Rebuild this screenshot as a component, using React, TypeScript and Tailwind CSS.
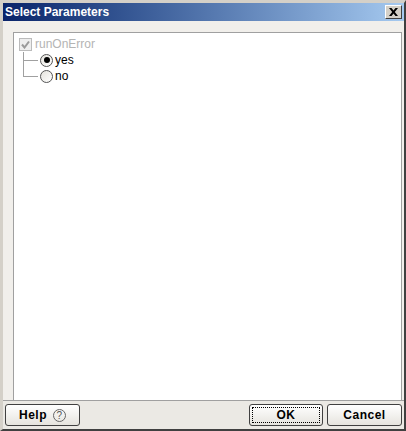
function TreeBranch({ label, checked, last }: { label: string; checked?: boolean; last?: boolean }) {
  return (
    <div className="flex h-4 items-center">
      <div className={`w-px shrink-0 self-start bg-[#a0a0a0] ${last ? "h-[9px]" : "h-4"}`} />
      <div className="h-px w-[14px] shrink-0 bg-[#a0a0a0]" />
      <div className="ml-[2px] flex h-[13px] w-[13px] shrink-0 items-center justify-center rounded-full border border-[#555] bg-gradient-to-br from-[#e4e2dc] to-white">
        {checked && <div className="h-[6px] w-[6px] rounded-full bg-black" />}
      </div>
      <span className="ml-[2px] text-[12px] leading-4 text-black">{label}</span>
    </div>
  );
}

function DialogButton({
  children,
  focused,
  className,
}: {
  children: React.ReactNode;
  focused?: boolean;
  className: string;
}) {
  return (
    <button
      className={`flex h-[22px] items-center justify-center rounded-[3px] border border-[#404040] bg-gradient-to-b from-white to-[#e6e4de] font-['Liberation_Sans'] text-[12px] font-bold tracking-[0.5px] text-black ${className}`}
    >
      {focused ? (
        <span className="flex h-[16px] w-[68px] items-center justify-center border border-dotted border-black">
          {children}
        </span>
      ) : (
        children
      )}
    </button>
  );
}

export default function App() {
  return (
    <div className="flex h-[431px] w-[406px] flex-col border-t-[3px] border-r-2 border-b-2 border-l-[3px] border-t-[#d4d0c8] border-r-[#404040] border-b-[#404040] border-l-[#d4d0c8] bg-[#f1efeb] font-['Liberation_Sans',sans-serif]">
      <div className="flex h-[18px] shrink-0 items-center justify-between bg-gradient-to-r from-[#0a246a] to-[#a6caf0] pl-[2px] pr-[2px]">
        <span className="font-['Liberation_Sans'] text-[12px] font-bold text-white">Select Parameters</span>
        <div className="flex h-[14px] w-[17px] items-center justify-center border border-[#404040] border-t-white border-l-white bg-[#d4d0c8]">
          <svg width="9" height="8" viewBox="0 0 9 8">
            <path d="M0 0h2.500L4.500 2.500 6.500 0H9L5.800 4 9 8H6.500L4.500 5.500 2.500 8H0l3.200-4z" fill="#000" />
          </svg>
        </div>
      </div>
      <div className="ml-[10px] mr-[2px] mt-[11px] flex flex-1 flex-col border border-b-0 border-[#a0a0a0] bg-white pl-[5px] pt-[3px]">
        <div className="flex h-4 items-center">
          <div className="flex h-[13px] w-[13px] items-center justify-center border border-[#bbb] bg-[#eeeeee]">
            <svg width="9" height="9" viewBox="0 0 9 9">
              <path d="M1 4.500 3.500 7.500 8 1.500" fill="none" stroke="#9a9a9a" strokeWidth="2" />
            </svg>
          </div>
          <span className="ml-[3px] text-[12px] leading-4 text-[#b4b4b4]">runOnError</span>
        </div>
        <div className="ml-[4px] flex w-fit flex-col">
          <TreeBranch label="yes" checked />
          <TreeBranch label="no" last />
        </div>
      </div>
      <div className="flex h-[29px] shrink-0 items-start justify-between border-t border-[#a0a0a0] bg-[#ebe9e4] pl-[2px] pr-[2px] pt-[3px]">
        <DialogButton className="w-[75px]">
          Help
          <span className="ml-[6px] flex h-[13px] w-[13px] items-center justify-center rounded-full border border-[#666] font-['Liberation_Sans'] text-[10px] font-normal text-[#555]">?</span>
        </DialogButton>
        <div className="flex gap-[4px]">
          <DialogButton focused className="w-[74px]">OK</DialogButton>
          <DialogButton className="w-[75px]">Cancel</DialogButton>
        </div>
      </div>
    </div>
  );
}
